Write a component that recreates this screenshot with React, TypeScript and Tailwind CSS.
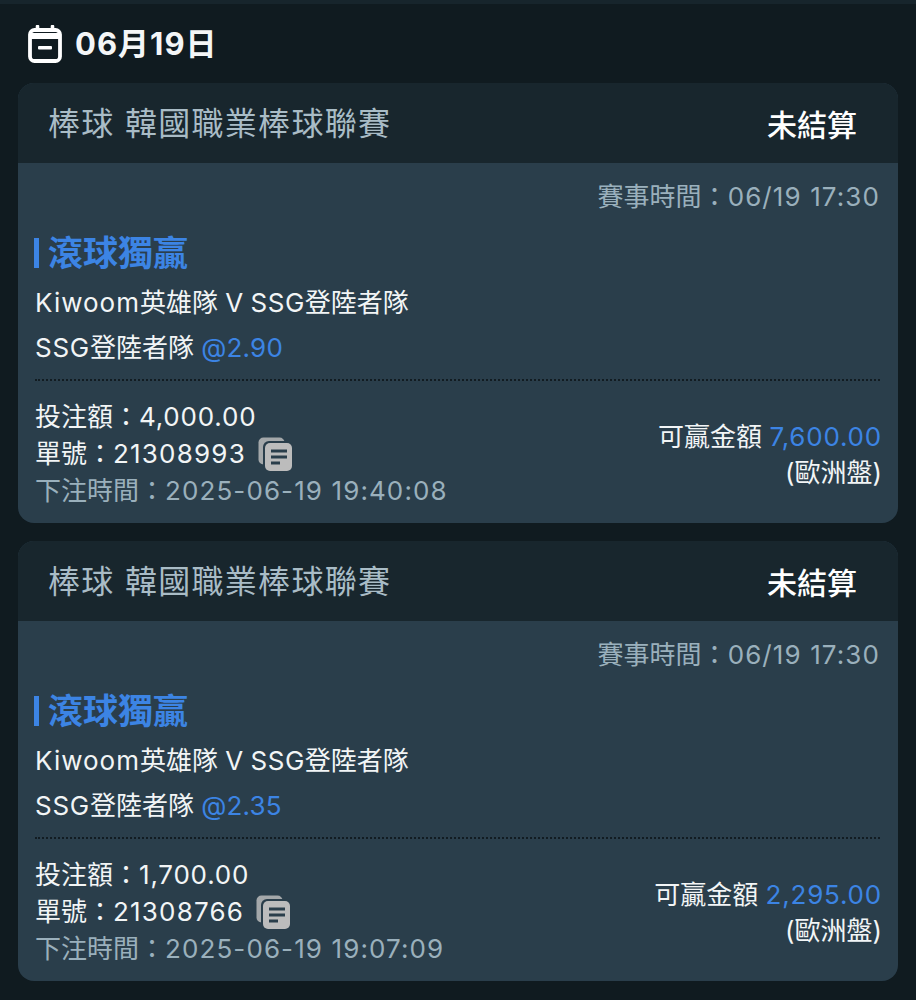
const font = { fontFamily: '"Inter", "Noto Sans CJK TC", sans-serif' };

type Bet = {
    odds: string;
    stake: string;
    orderNo: string;
    placedAt: string;
    payout: string;
};

const bets: Bet[] = [
    { odds: "@2.90", stake: "4,000.00", orderNo: "21308993", placedAt: "2025-06-19 19:40:08", payout: "7,600.00" },
    { odds: "@2.35", stake: "1,700.00", orderNo: "21308766", placedAt: "2025-06-19 19:07:09", payout: "2,295.00" },
];

const CalendarIcon = () => (
    <svg width="34" height="38" viewBox="0 0 34 38" className="shrink-0">
        <path d="M9.5 1.5v6M24.5 1.5v6" stroke="#fff" strokeWidth="3.6" strokeLinecap="round" />
        <rect x="2" y="5" width="30" height="31" rx="4.5" fill="#101b20" stroke="#fff" strokeWidth="3.8" />
        <path d="M2 11h30" stroke="#fff" strokeWidth="6" />
        <rect x="10" y="21" width="14" height="3.6" rx="1" fill="#fff" />
    </svg>
);

const CopyIcon = () => (
    <svg width="34" height="34" viewBox="0 0 34 34" className="shrink-0">
        <rect x="0.5" y="0.5" width="26" height="27" rx="5" fill="#a4a8aa" />
        <rect x="5" y="4" width="29" height="30" rx="6" fill="#2a3e4b" />
        <rect x="7" y="6" width="27" height="28" rx="5" fill="#bcbcbc" />
        <path d="M13 14h16M13 20h16M13 26h9" stroke="#2a3e4b" strokeWidth="2.8" />
    </svg>
);

const BetCard = ({ bet }: { bet: Bet }) => {
    return (
        <section className="rounded-[16px] overflow-hidden bg-[#2a3e4b]">
            <header className="h-20 flex items-center justify-between pl-[30px] pr-[41px] bg-[#18262d]">
                <h2 className="pt-[2px] text-[32px] leading-none tracking-[1.3px] text-[#a9bcc6]">棒球 韓國職業棒球聯賽</h2>
                <span className="pt-[3px] text-[30px] leading-none font-medium text-white">未結算</span>
            </header>
            <div className="h-[360px] pl-[17px] pr-[16px] pt-[18px]">
                <p className="text-right pr-[2px] text-[26px] leading-[32px] text-[#9ab0bc]">
                    賽事時間：<span className="tracking-[1.1px]">06/19 17:30</span>
                </p>
                <h3 className="mt-[19px] -ml-[1px] flex items-center gap-[9px] text-[35px] leading-[42px] font-bold text-[#3c84e4]">
                    <span className="w-[5px] h-[30px] bg-[#3c84e4]"></span>
                    滾球獨贏
                </h3>
                <p className="mt-[11px] text-[26px] leading-[36px] text-[#f2f5f6]">
                    <span className="tracking-[1px]">Kiwoom</span>英雄隊 V <span className="tracking-[0.5px]">SSG</span>登陸者隊
                </p>
                <p className="mt-[9px] text-[26px] leading-[36px] text-[#f2f5f6]">
                    <span className="tracking-[0.7px]">SSG</span>登陸者隊 <span className="tracking-[0.2px] text-[#3c84e4]">{bet.odds}</span>
                </p>
                <div className="mt-[13px] mr-[2px] border-t-2 border-dotted border-[#121c22]"></div>
                <div className="mt-[17px] flex items-center justify-between">
                    <div className="text-[26px] leading-[37px] text-[#f2f5f6]">
                        <p>
                            投注額：<span className="tracking-[0.8px]">{bet.stake}</span>
                        </p>
                        <p className="flex items-center gap-[12px]">
                            <span>
                                單號：<span className="tracking-[1.2px]">{bet.orderNo}</span>
                            </span>
                            <CopyIcon />
                        </p>
                        <p className="text-[#9ab0bc]">
                            下注時間：<span className="tracking-[1.1px]">{bet.placedAt}</span>
                        </p>
                    </div>
                    <div className="mt-[2px] text-right text-[26px] leading-[36px] text-[#f2f5f6]">
                        <p>
                            可贏金額 <span className="tracking-[0.8px] text-[#3c84e4]">{bet.payout}</span>
                        </p>
                        <p>(歐洲盤)</p>
                    </div>
                </div>
            </div>
        </section>
    );
};

export default function App() {
    return (
        <div style={font} className="w-[916px] h-[1000px] overflow-hidden bg-[#101b20]">
            <div className="h-[4px] bg-[#17252c]"></div>
            <div className="px-[18px]">
                <div className="h-[79px] flex items-center gap-[13px] pl-[10px]">
                    <CalendarIcon />
                    <span className="text-[31px] tracking-[1px] font-bold leading-none text-[#f4f6f7]">06月19日</span>
                </div>
                <div className="flex flex-col gap-[18px]">
                    {bets.map((bet) => (
                        <BetCard key={bet.orderNo} bet={bet} />
                    ))}
                </div>
            </div>
        </div>
    );
}
